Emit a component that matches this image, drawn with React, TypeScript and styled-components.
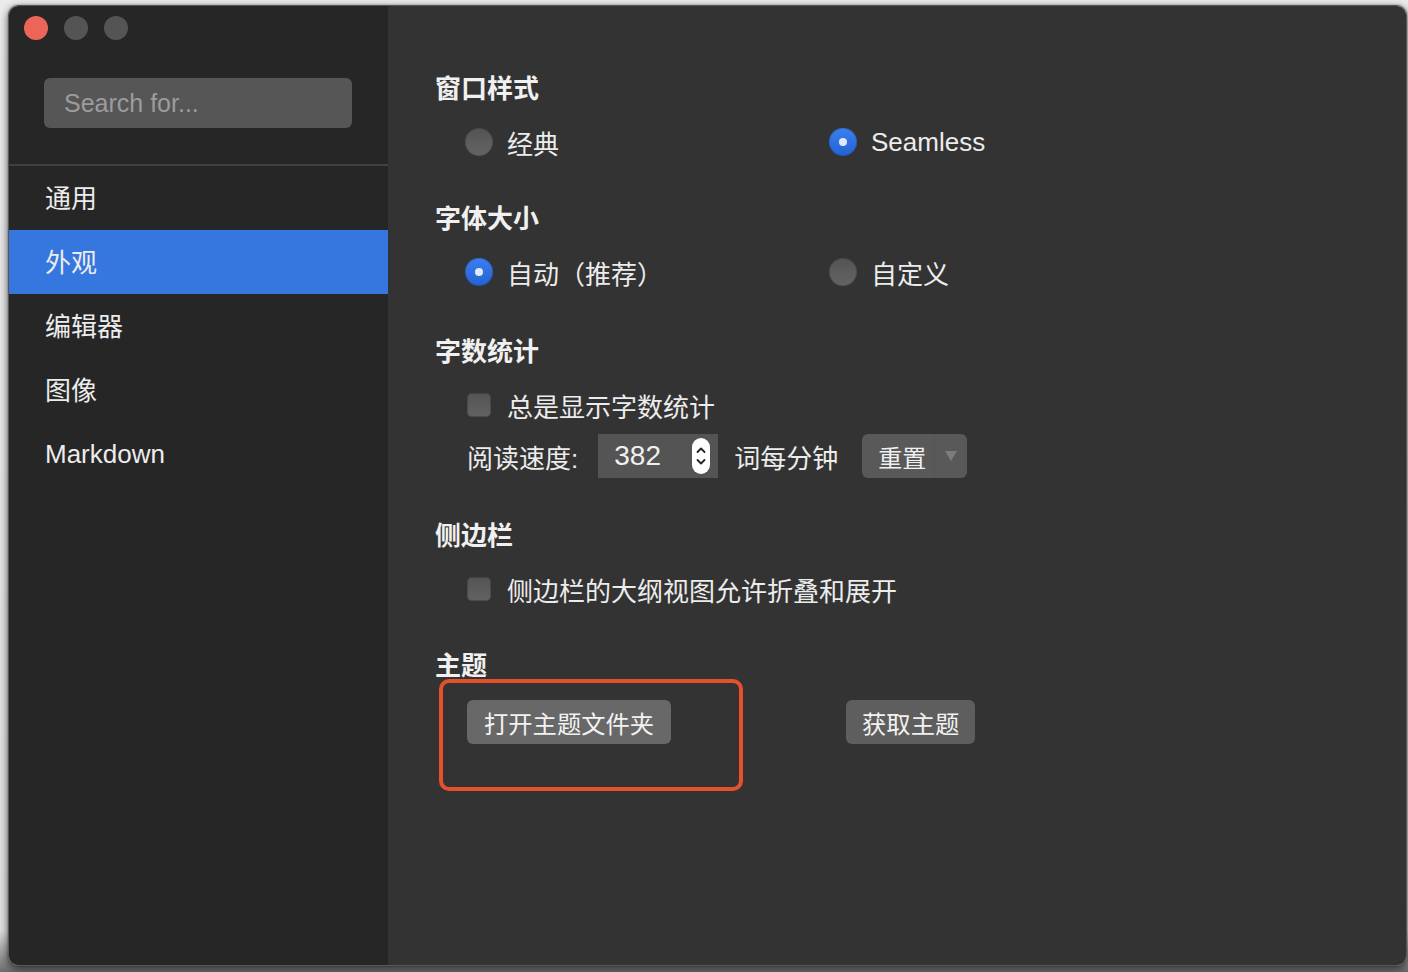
import React from "react";
import styled, { createGlobalStyle } from "styled-components";

const Global = createGlobalStyle`
  html, body { margin: 0; padding: 0; }
  body {
    background: linear-gradient(to bottom, #ececec 0px, #e2e2e2 930px, #6c6c6c 972px);
    height: 972px;
    overflow: hidden;
    font-family: "Liberation Sans", "Noto Sans CJK SC", sans-serif;
  }
`;

const Stage = styled.div`
  padding: 5px 1px 0 8px;
`;

const Window = styled.div`
  width: 1399px;
  height: 961px;
  box-sizing: border-box;
  border: 1px solid #575757;
  border-radius: 10px;
  overflow: hidden;
  display: flex;
  box-shadow: 0 3px 10px rgba(0, 0, 0, 0.6), 0 0 2px rgba(0, 0, 0, 0.4);
  color: #e8e8e8;
`;

const Sidebar = styled.aside`
  width: 379px;
  flex: none;
  background: #262626;
  display: flex;
  flex-direction: column;
`;

const TitleArea = styled.div`
  padding: 10px 0 36px 15px;
  display: flex;
  flex-direction: column;
  border-bottom: 2px solid #404040;
`;

const Lights = styled.div`
  display: flex;
  gap: 16px;
`;

const Light = styled.span<{ $color: string }>`
  width: 24px;
  height: 24px;
  border-radius: 50%;
  background: ${(p) => p.$color};
`;

const Search = styled.div`
  margin: 38px 0 0 20px;
  width: 308px;
  height: 50px;
  box-sizing: border-box;
  border-radius: 6px;
  background: #565656;
  color: #9c9c9c;
  font-size: 25px;
  padding-left: 20px;
  display: flex;
  align-items: center;
`;

const Nav = styled.nav`
  display: flex;
  flex-direction: column;
`;

const NavItem = styled.div<{ $active?: boolean; $latin?: boolean }>`
  height: 64px;
  display: flex;
  align-items: center;
  padding: 0 0 ${(p) => (p.$latin ? 0 : 3)}px 36px;
  box-sizing: border-box;
  font-size: 26px;
  color: #ececec;
  background: ${(p) => (p.$active ? "#3676df" : "transparent")};
`;

const Main = styled.main`
  flex: 1;
  background: #333333;
  padding: 65px 0 0 47px;
  display: flex;
  flex-direction: column;
`;

const Section = styled.section<{ $top: number }>`
  margin-top: ${(p) => p.$top}px;
  display: flex;
  flex-direction: column;
`;

const Heading = styled.h2`
  margin: 0;
  height: 36px;
  line-height: 36px;
  font-size: 26px;
  font-weight: 700;
  color: #f0f0f0;
`;

const RadioGrid = styled.div`
  margin-top: 13px;
  padding-left: 30px;
  display: grid;
  grid-template-columns: 364px auto;
  height: 44px;
`;

const OptionRow = styled.label<{ $gap: number }>`
  display: flex;
  align-items: center;
  gap: ${(p) => p.$gap}px;
  font-size: 26px;
  color: #ececec;
`;

const Radio = styled.span<{ $on?: boolean }>`
  width: 28px;
  height: 28px;
  border-radius: 50%;
  flex: none;
  display: flex;
  align-items: center;
  justify-content: center;
  background: ${(p) =>
    p.$on
      ? "linear-gradient(#3b7ff0, #2462d1)"
      : "linear-gradient(#545454, #646464)"};
  box-shadow: inset 0 0 0 1px rgba(0, 0, 0, 0.15);
  &::after {
    content: "";
    display: ${(p) => (p.$on ? "block" : "none")};
    width: 8px;
    height: 8px;
    border-radius: 50%;
    background: #dfe9ff;
  }
`;

const CheckRow = styled(OptionRow)`
  margin-top: 13px;
  padding-left: 32px;
  height: 44px;
`;

const Checkbox = styled.span`
  width: 24px;
  height: 24px;
  border-radius: 5px;
  flex: none;
  background: linear-gradient(#545454, #626262);
  box-shadow: inset 0 0 0 1px rgba(0, 0, 0, 0.2);
`;

const SpeedRow = styled.div`
  margin-top: 7px;
  padding-left: 32px;
  height: 44px;
  display: flex;
  align-items: center;
  font-size: 26px;
  color: #ececec;
`;

const NumberBox = styled.div`
  margin-left: 20px;
  width: 120px;
  height: 44px;
  box-sizing: border-box;
  background: #545454;
  display: flex;
  align-items: center;
  justify-content: space-between;
  padding: 0 8px 0 16px;
  font-size: 28px;
  color: #f0f0f0;
`;

const Stepper = styled.span`
  width: 18px;
  height: 36px;
  border-radius: 9px;
  background: #ffffff;
  display: flex;
  align-items: center;
  justify-content: center;
`;

const Unit = styled.span`
  margin-left: 16px;
`;

const Dropdown = styled.div`
  margin-left: 24px;
  width: 105px;
  height: 44px;
  border-radius: 6px;
  background: #595959;
  display: flex;
  align-items: center;
  font-size: 24px;
  color: #f0f0f0;
`;

const DropLabel = styled.span`
  padding-left: 16px;
  width: 56px;
  height: 100%;
  display: flex;
  align-items: center;
  border-right: 1px solid #545454;
`;

const DropArrow = styled.span`
  flex: 1;
  display: flex;
  justify-content: center;
  align-items: center;
`;

const ButtonRow = styled.div`
  position: relative;
  margin-top: 16px;
  padding-left: 32px;
  display: flex;
  align-items: center;
`;

const Button = styled.button<{ $light?: boolean }>`
  height: 44px;
  border: none;
  border-radius: 6px;
  padding: 0 17px 0 17px;
  font-family: "Noto Sans CJK SC", sans-serif;
  font-size: 24.3px;
  color: #f2f2f2;
  background: ${(p) => (p.$light ? "#686868" : "#5e5e5e")};
`;

const SecondButton = styled(Button)`
  margin-left: 175px;
  padding: 0 16px;
`;

const Highlight = styled.div`
  position: absolute;
  left: 4px;
  top: -21px;
  width: 304px;
  height: 112px;
  box-sizing: border-box;
  border: 4px solid #e5502d;
  border-radius: 10px;
  pointer-events: none;
`;

export default function App() {
  return (
    <>
      <Global />
      <Stage>
        <Window>
          <Sidebar>
            <TitleArea>
              <Lights>
                <Light $color="#ec655a" />
                <Light $color="#545454" />
                <Light $color="#545454" />
              </Lights>
              <Search>Search for...</Search>
            </TitleArea>
            <Nav>
              <NavItem>通用</NavItem>
              <NavItem $active>外观</NavItem>
              <NavItem>编辑器</NavItem>
              <NavItem>图像</NavItem>
              <NavItem $latin>Markdown</NavItem>
            </Nav>
          </Sidebar>
          <Main>
            <Section $top={0}>
              <Heading>窗口样式</Heading>
              <RadioGrid>
                <OptionRow $gap={14}>
                  <Radio />
                  经典
                </OptionRow>
                <OptionRow $gap={14}>
                  <Radio $on />
                  Seamless
                </OptionRow>
              </RadioGrid>
            </Section>
            <Section $top={37}>
              <Heading>字体大小</Heading>
              <RadioGrid>
                <OptionRow $gap={14}>
                  <Radio $on />
                  自动（推荐）
                </OptionRow>
                <OptionRow $gap={14}>
                  <Radio />
                  自定义
                </OptionRow>
              </RadioGrid>
            </Section>
            <Section $top={40}>
              <Heading>字数统计</Heading>
              <CheckRow $gap={16}>
                <Checkbox />
                总是显示字数统计
              </CheckRow>
              <SpeedRow>
                阅读速度:
                <NumberBox>
                  382
                  <Stepper>
                    <svg width="12" height="28" viewBox="0 0 12 28">
                      <path d="M2.5 10 L6 6.5 L9.5 10" fill="none" stroke="#222" strokeWidth="1.8" strokeLinecap="round" strokeLinejoin="round" />
                      <path d="M2.5 18 L6 21.5 L9.5 18" fill="none" stroke="#222" strokeWidth="1.8" strokeLinecap="round" strokeLinejoin="round" />
                    </svg>
                  </Stepper>
                </NumberBox>
                <Unit>词每分钟</Unit>
                <Dropdown>
                  <DropLabel>重置</DropLabel>
                  <DropArrow>
                    <svg width="12" height="10" viewBox="0 0 12 10">
                      <path d="M0 0 H12 L6 10 Z" fill="#7c7c7c" />
                    </svg>
                  </DropArrow>
                </Dropdown>
              </SpeedRow>
            </Section>
            <Section $top={40}>
              <Heading>侧边栏</Heading>
              <CheckRow $gap={16}>
                <Checkbox />
                侧边栏的大纲视图允许折叠和展开
              </CheckRow>
            </Section>
            <Section $top={37}>
              <Heading>主题</Heading>
              <ButtonRow>
                <Button $light>打开主题文件夹</Button>
                <SecondButton>获取主题</SecondButton>
                <Highlight />
              </ButtonRow>
            </Section>
          </Main>
        </Window>
      </Stage>
    </>
  );
}
